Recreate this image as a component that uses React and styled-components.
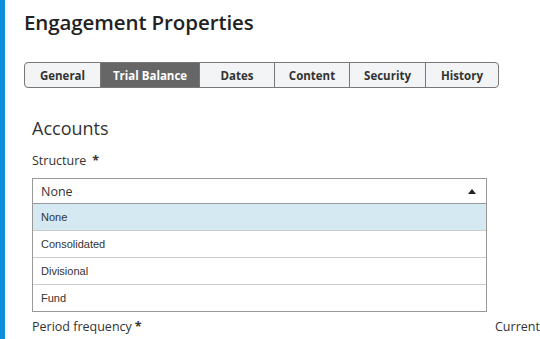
import React from 'react'
import styled, { createGlobalStyle } from 'styled-components'

const Global = createGlobalStyle`
  html, body {
    margin: 0;
    padding: 0;
    background: #fff;
    font-family: "Open Sans", "Noto Sans", sans-serif;
    color: #333;
  }
`

const Page = styled.div`
  display: flex;
  height: 339px;
  overflow: hidden;
`

const SideBar = styled.div`
  width: 5px;
  flex: none;
  background: #0d8fdb;
`

const Main = styled.div`
  flex: 1;
  padding-left: 19px;
`

const Title = styled.h1`
  margin: 8px 0 0;
  font-size: 20.5px;
  font-weight: 600;
  line-height: 28px;
  color: #222;
  letter-spacing: -0.1px;
`

const TabBar = styled.div`
  display: flex;
  margin-top: 26px;
  width: 473px;
  height: 24px;
  border: 1px solid #777;
  border-radius: 4px;
  overflow: hidden;
  background: #f2f4f6;
`

const Tab = styled.div`
  width: ${p => p.$w}px;
  flex: none;
  display: flex;
  align-items: center;
  justify-content: center;
  font-size: 11.5px;
  font-weight: 700;
  color: ${p => (p.$active ? '#fff' : '#333')};
  background: ${p => (p.$active ? '#666' : 'transparent')};
  border-left: ${p => (p.$first ? 'none' : '1px solid #777')};
  box-sizing: border-box;
`

const Section = styled.div`
  padding-left: 8px;
`

const SectionTitle = styled.h2`
  margin: 28px 0 0;
  font-size: 18px;
  font-weight: 400;
  line-height: 24px;
  color: #333;
`

const Label = styled.div`
  margin-top: ${p => p.$mt || 0}px;
  font-size: 12.5px;
  line-height: 18px;
  color: #333;

  span {
    margin-left: 6px;
    font-weight: 700;
  }
`

const SelectWrap = styled.div`
  position: relative;
  width: 455px;
  margin-top: 8px;
`

const SelectBox = styled.div`
  height: 24px;
  border: 1px solid #999;
  display: flex;
  align-items: center;
  justify-content: space-between;
  padding: 0 10px 0 8px;
  font-size: 12.5px;
  color: #333;
`

const Caret = styled.span`
  width: 0;
  height: 0;
  border-left: 4px solid transparent;
  border-right: 4px solid transparent;
  border-bottom: 5px solid #222;
`

const Menu = styled.ul`
  position: absolute;
  left: 0;
  right: 0;
  top: 26px;
  margin: 0;
  padding: 0;
  list-style: none;
  background: #fff;
  border: 1px solid #999;
  border-top: none;
  z-index: 2;
`

const Option = styled.li`
  height: 26px;
  display: flex;
  align-items: center;
  padding-left: 8px;
  font-family: "Liberation Sans", Arial, sans-serif;
  font-size: 11px;
  color: #333;
  background: ${p => (p.$selected ? '#d4e9f2' : '#fff')};
  border-top: ${p => (p.$first ? 'none' : '1px solid #ccc')};
`

const FieldRow = styled.div`
  display: grid;
  grid-template-columns: 463px auto;
  margin-top: 114px;
`

const tabs = [
  { label: 'General', w: 75 },
  { label: 'Trial Balance', w: 99, active: true },
  { label: 'Dates', w: 75 },
  { label: 'Content', w: 75 },
  { label: 'Security', w: 76 },
  { label: 'History', w: 73 },
]

const options = ['None', 'Consolidated', 'Divisional', 'Fund']

export default function App() {
  return (
    <Page>
      <Global />
      <SideBar />
      <Main>
        <Title>Engagement Properties</Title>
        <TabBar>
          {tabs.map((t, i) => (
            <Tab key={t.label} $w={t.w} $active={t.active} $first={i === 0}>
              {t.label}
            </Tab>
          ))}
        </TabBar>
        <Section>
          <SectionTitle>Accounts</SectionTitle>
          <Label $mt={12}>
            Structure<span>*</span>
          </Label>
          <SelectWrap>
            <SelectBox>
              None
              <Caret />
            </SelectBox>
            <Menu>
              {options.map((o, i) => (
                <Option key={o} $selected={i === 0} $first={i === 0}>
                  {o}
                </Option>
              ))}
            </Menu>
          </SelectWrap>
          <FieldRow>
            <Label>
              Period frequency<span style={{ marginLeft: 3 }}>*</span>
            </Label>
            <Label>Current</Label>
          </FieldRow>
        </Section>
      </Main>
    </Page>
  )
}
